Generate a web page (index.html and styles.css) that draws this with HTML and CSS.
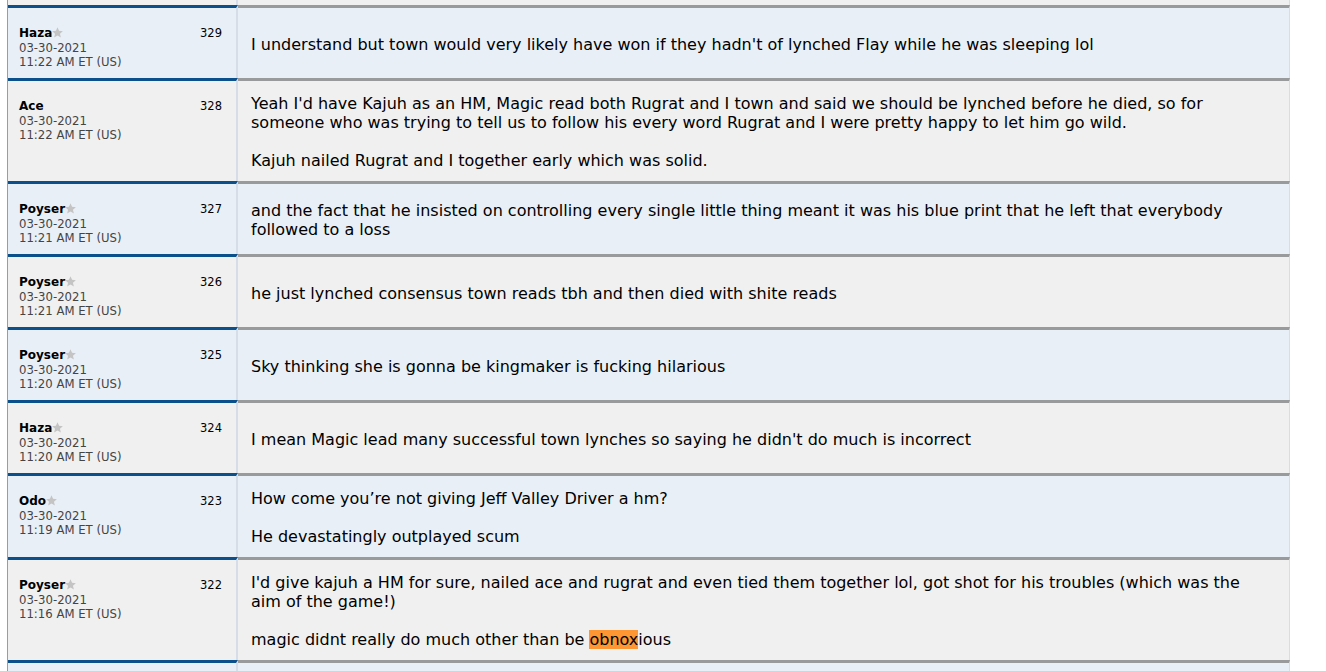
FILE: index.html
```html
<!DOCTYPE html>
<html>
<head>
<meta charset="utf-8">
<link rel="stylesheet" href="styles.css">
</head>
<body>
<div class="thread">
  <div class="post alt2 tail">
    <div class="meta"></div>
    <div class="body"></div>
  </div>

  <div class="post alt1">
    <div class="meta">
      <div class="top"><span class="name">Haza<svg class="star" viewBox="1 1 22 22"><path d="M12 1.5l3.1 7.1 7.6.7-5.8 5 1.8 7.5L12 17.8l-6.7 4 1.8-7.5-5.8-5 7.6-.7z"/></svg></span><span class="num">329</span></div>
      <div class="date">03-30-2021</div>
      <div class="date">11:22 AM ET (US)</div>
    </div>
    <div class="body"><div class="text">I understand but town would very likely have won if they hadn't of lynched Flay while he was sleeping lol</div></div>
  </div>

  <div class="post alt2">
    <div class="meta">
      <div class="top"><span class="name">Ace</span><span class="num">328</span></div>
      <div class="date">03-30-2021</div>
      <div class="date">11:22 AM ET (US)</div>
    </div>
    <div class="body"><div class="text">Yeah I'd have Kajuh as an HM, Magic read both Rugrat and I town and said we should be lynched before he died, so for someone who was trying to tell us to follow his every word Rugrat and I were pretty happy to let him go wild.<br><br>Kajuh nailed Rugrat and I together early which was solid.</div></div>
  </div>

  <div class="post alt1">
    <div class="meta">
      <div class="top"><span class="name">Poyser<svg class="star" viewBox="1 1 22 22"><path d="M12 1.5l3.1 7.1 7.6.7-5.8 5 1.8 7.5L12 17.8l-6.7 4 1.8-7.5-5.8-5 7.6-.7z"/></svg></span><span class="num">327</span></div>
      <div class="date">03-30-2021</div>
      <div class="date">11:21 AM ET (US)</div>
    </div>
    <div class="body"><div class="text">and the fact that he insisted on controlling every single little thing meant it was his blue print that he left that everybody followed to a loss</div></div>
  </div>

  <div class="post alt2">
    <div class="meta">
      <div class="top"><span class="name">Poyser<svg class="star" viewBox="1 1 22 22"><path d="M12 1.5l3.1 7.1 7.6.7-5.8 5 1.8 7.5L12 17.8l-6.7 4 1.8-7.5-5.8-5 7.6-.7z"/></svg></span><span class="num">326</span></div>
      <div class="date">03-30-2021</div>
      <div class="date">11:21 AM ET (US)</div>
    </div>
    <div class="body"><div class="text">he just lynched consensus town reads tbh and then died with shite reads</div></div>
  </div>

  <div class="post alt1">
    <div class="meta">
      <div class="top"><span class="name">Poyser<svg class="star" viewBox="1 1 22 22"><path d="M12 1.5l3.1 7.1 7.6.7-5.8 5 1.8 7.5L12 17.8l-6.7 4 1.8-7.5-5.8-5 7.6-.7z"/></svg></span><span class="num">325</span></div>
      <div class="date">03-30-2021</div>
      <div class="date">11:20 AM ET (US)</div>
    </div>
    <div class="body"><div class="text">Sky thinking she is gonna be kingmaker is fucking hilarious</div></div>
  </div>

  <div class="post alt2">
    <div class="meta">
      <div class="top"><span class="name">Haza<svg class="star" viewBox="1 1 22 22"><path d="M12 1.5l3.1 7.1 7.6.7-5.8 5 1.8 7.5L12 17.8l-6.7 4 1.8-7.5-5.8-5 7.6-.7z"/></svg></span><span class="num">324</span></div>
      <div class="date">03-30-2021</div>
      <div class="date">11:20 AM ET (US)</div>
    </div>
    <div class="body"><div class="text">I mean Magic lead many successful town lynches so saying he didn't do much is incorrect</div></div>
  </div>

  <div class="post alt1">
    <div class="meta">
      <div class="top"><span class="name">Odo<svg class="star" viewBox="1 1 22 22"><path d="M12 1.5l3.1 7.1 7.6.7-5.8 5 1.8 7.5L12 17.8l-6.7 4 1.8-7.5-5.8-5 7.6-.7z"/></svg></span><span class="num">323</span></div>
      <div class="date">03-30-2021</div>
      <div class="date">11:19 AM ET (US)</div>
    </div>
    <div class="body"><div class="text">How come you’re not giving Jeff Valley Driver a hm?<br><br>He devastatingly outplayed scum</div></div>
  </div>

  <div class="post alt2">
    <div class="meta">
      <div class="top"><span class="name">Poyser<svg class="star" viewBox="1 1 22 22"><path d="M12 1.5l3.1 7.1 7.6.7-5.8 5 1.8 7.5L12 17.8l-6.7 4 1.8-7.5-5.8-5 7.6-.7z"/></svg></span><span class="num">322</span></div>
      <div class="date">03-30-2021</div>
      <div class="date">11:16 AM ET (US)</div>
    </div>
    <div class="body"><div class="text">I'd give kajuh a HM for sure, nailed ace and rugrat and even tied them together lol, got shot for his troubles (which was the aim of the game!)<br><br>magic didnt really do much other than be <span class="hl">obnox</span>ious</div></div>
  </div>

  <div class="post alt1 next">
    <div class="meta"></div>
    <div class="body"></div>
  </div>
</div>
</body>
</html>
```

FILE: styles.css
```css
html { overflow: hidden; }
body {
  margin: 0;
  background: #fff;
  font-family: "DejaVu Sans", Verdana, sans-serif;
  color: #000;
}
.thread {
  margin-left: 7px;
  width: 1282px;
  border-left: 1px solid #9c9c9c;
}
.post {
  display: flex;
}
.alt1 { background: #e9eff7; }
.alt2 { background: #f0f0f0; }
.meta {
  width: 230px;
  flex: none;
  border-top: 3px solid #0b4f8b;
  border-right: 2px solid #d6dde6;
  padding: 18px 14px 9px 11px;
  box-sizing: border-box;
}
.body {
  flex: 1;
  border-top: 3px solid #999a9c;
  border-right: 1px solid #d6dde6;
  padding: 13px 24px 11px 13px;
  display: flex;
  align-items: center;
}
.tail .meta, .tail .body {
  border-top: 0;
  padding: 0;
  height: 5px;
}
.next .meta, .next .body {
  padding: 0;
  height: 30px;
}
.top {
  display: flex;
  justify-content: space-between;
  align-items: baseline;
  height: 15px;
  line-height: 15px;
}
.name {
  font-weight: bold;
  font-size: 12px;
}
.star {
  width: 11px;
  height: 11px;
  fill: #c4c4c4;
  vertical-align: -1px;
}
.num {
  font-size: 11.5px;
}
.date {
  font-size: 11.7px;
  line-height: 14px;
  color: #444;
}
.text {
  font-size: 16px;
  line-height: 19px;
}
.hl {
  background: #fe9634;
}
```
